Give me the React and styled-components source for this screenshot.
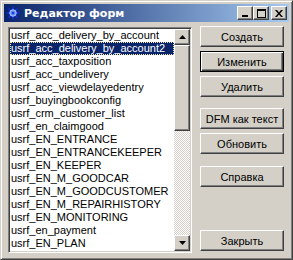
import React from "react";
import styled, { createGlobalStyle, css } from "styled-components";

const Global = createGlobalStyle`
  html, body { margin: 0; padding: 0; background: #D4D0C8; }
  body { font-family: "Liberation Sans", Arial, sans-serif; }
`;

const raised = css`
  border: 1px solid;
  border-color: #FFFFFF #404040 #404040 #FFFFFF;
  box-shadow: inset -1px -1px #808080, inset 1px 1px #D4D0C8;
`;

const Window = styled.div`
  box-sizing: border-box;
  width: 293px;
  height: 260px;
  background: #D4D0C8;
  border: 1px solid;
  border-color: #D4D0C8 #404040 #404040 #D4D0C8;
  box-shadow: inset 1px 1px #FFFFFF, inset -1px -1px #808080;
  padding: 3px;
  display: flex;
  flex-direction: column;
`;

const TitleBar = styled.div`
  height: 18px;
  display: flex;
  align-items: center;
  padding: 0 2px 0 1px;
  background: linear-gradient(to right, #0A246A, #A6CAF0);
  color: #fff;
`;

const TitleIcon = styled.svg`
  width: 16px;
  height: 16px;
  flex: none;
`;

const TitleText = styled.span`
  margin-left: 3px;
  font-weight: bold;
  font-size: 11px;
  font-family: "DejaVu Sans", Verdana, sans-serif;
  flex: 1;
  white-space: nowrap;
`;

const CaptionButton = styled.div`
  box-sizing: border-box;
  width: 16px;
  height: 14px;
  background: #D4D0C8;
  ${raised};
  display: flex;
  align-items: center;
  justify-content: center;
  margin-left: ${(p) => p.$gap || 0}px;
  svg { display: block; }
`;

const Client = styled.div`
  flex: 1;
  display: flex;
  padding: 4px 5px 0 4px;
  gap: 8px;
`;

const ListBox = styled.div`
  box-sizing: border-box;
  width: 184px;
  height: 226px;
  margin-top: 1px;
  background: #fff;
  border: 1px solid;
  border-color: #808080 #FFFFFF #FFFFFF #808080;
  box-shadow: inset 1px 1px #404040, inset -1px -1px #D4D0C8;
  padding: 1px;
  display: flex;
  overflow: hidden;
`;

const Items = styled.div`
  flex: 1;
  overflow: hidden;
  display: flex;
  flex-direction: column;
`;

const Item = styled.div`
  box-sizing: border-box;
  height: 13px;
  line-height: 13px;
  padding-left: 1px;
  font-size: 11px;
  white-space: nowrap;
  color: ${(p) => (p.$selected ? "#fff" : "#000")};
  background: ${(p) => (p.$selected ? "#0A246A" : "transparent")};
  ${(p) =>
    p.$selected &&
    css`
      outline: 1px dotted #F3E7B0;
      outline-offset: -1px;
    `}
`;

const ScrollBar = styled.div`
  width: 16px;
  display: flex;
  flex-direction: column;
  background: repeating-conic-gradient(#D4D0C8 0 25%, #FFFFFF 0 50%) 0 0 / 2px 2px;
`;

const ScrollButton = styled.div`
  box-sizing: border-box;
  width: 16px;
  height: 16px;
  background: #D4D0C8;
  ${raised};
  display: flex;
  align-items: center;
  justify-content: center;
  flex: none;
`;

const Thumb = styled.div`
  box-sizing: border-box;
  width: 16px;
  height: 86px;
  background: #D4D0C8;
  ${raised};
  flex: none;
`;

const Track = styled.div`
  flex: 1;
`;

const Buttons = styled.div`
  display: flex;
  flex-direction: column;
  width: 84px;
`;

const Button = styled.div`
  box-sizing: border-box;
  height: 21px;
  margin-top: ${(p) => p.$mt || 0}px;
  background: #D4D0C8;
  font-size: 11px;
  color: #000;
  display: flex;
  align-items: center;
  justify-content: center;
  ${(p) =>
    p.$default
      ? css`
          border: 1px solid #000;
          box-shadow: inset 1px 1px #FFFFFF, inset -1px -1px #404040,
            inset -2px -2px #808080;
        `
      : raised}
`;

const items = [
  "usrf_acc_delivery_by_account",
  "usrf_acc_delivery_by_account2",
  "usrf_acc_taxposition",
  "usrf_acc_undelivery",
  "usrf_acc_viewdelayedentry",
  "usrf_buyingbookconfig",
  "usrf_crm_customer_list",
  "usrf_en_claimgood",
  "usrf_EN_ENTRANCE",
  "usrf_EN_ENTRANCEKEEPER",
  "usrf_EN_KEEPER",
  "usrf_EN_M_GOODCAR",
  "usrf_EN_M_GOODCUSTOMER",
  "usrf_EN_M_REPAIRHISTORY",
  "usrf_EN_MONITORING",
  "usrf_en_payment",
  "usrf_EN_PLAN",
];

const AppIcon = () => (
  <TitleIcon viewBox="0 0 16 16">
    <polygon
      points="8,0 9.5,5 14,2 11,6.5 16,8 11,9.5 14,14 9.5,11 8,16 6.5,11 2,14 5,9.5 0,8 5,6.5 2,2 6.5,5"
      fill="#1E3CE0"
      stroke="#0A1E9A"
      strokeWidth="0.5"
    />
    <circle cx="8" cy="8" r="3.2" fill="#5A8CFF" stroke="#C8DCFF" strokeWidth="0.8" />
    <circle cx="8" cy="8" r="1.3" fill="#1E3CE0" />
  </TitleIcon>
);

export default function App() {
  return (
    <>
      <Global />
      <Window>
        <TitleBar>
          <AppIcon />
          <TitleText>Редактор форм</TitleText>
          <CaptionButton>
            <svg width="8" height="8" viewBox="0 0 8 8">
              <rect x="1" y="6" width="6" height="2" fill="#000" />
            </svg>
          </CaptionButton>
          <CaptionButton>
            <svg width="9" height="9" viewBox="0 0 9 9">
              <rect x="0.5" y="0.5" width="8" height="8" fill="none" stroke="#000" />
              <rect x="0" y="0" width="9" height="2" fill="#000" />
            </svg>
          </CaptionButton>
          <CaptionButton $gap={2}>
            <svg width="8" height="7" viewBox="0 0 8 7">
              <path d="M0 0h2l2 2.5L6 0h2L5 3.5 8 7H6L4 4.5 2 7H0l3-3.5z" fill="#000" />
            </svg>
          </CaptionButton>
        </TitleBar>
        <Client>
          <ListBox>
            <Items>
              {items.map((t, i) => (
                <Item key={t} $selected={i === 1}>
                  {t}
                </Item>
              ))}
            </Items>
            <ScrollBar>
              <ScrollButton>
                <svg width="7" height="4" viewBox="0 0 7 4">
                  <path d="M3.5 0L7 4H0z" fill="#000" />
                </svg>
              </ScrollButton>
              <Thumb />
              <Track />
              <ScrollButton>
                <svg width="7" height="4" viewBox="0 0 7 4">
                  <path d="M0 0h7L3.5 4z" fill="#000" />
                </svg>
              </ScrollButton>
            </ScrollBar>
          </ListBox>
          <Buttons>
            <Button>Создать</Button>
            <Button $mt={4} $default>
              Изменить
            </Button>
            <Button $mt={4}>Удалить</Button>
            <Button $mt={11}>DFM как текст</Button>
            <Button $mt={4}>Обновить</Button>
            <Button $mt={12}>Справка</Button>
            <Button $mt={43}>Закрыть</Button>
          </Buttons>
        </Client>
      </Window>
    </>
  );
}
